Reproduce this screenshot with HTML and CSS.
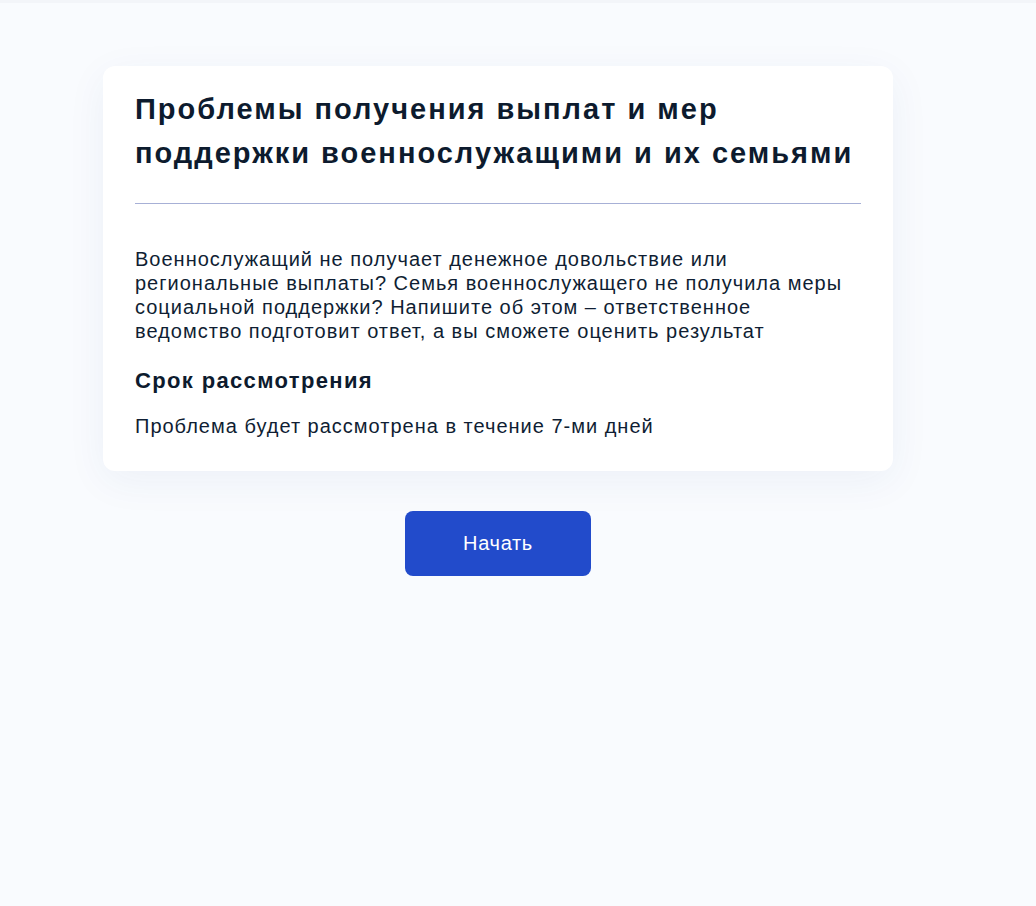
FILE: index.html
```html
<!DOCTYPE html>
<html lang="ru">
<head>
<meta charset="utf-8">
<title>Проблемы получения выплат</title>
<link rel="stylesheet" href="styles.css">
</head>
<body>
<div class="topbar"></div>
<main class="wrap">
  <section class="card">
    <h1 class="title">Проблемы получения выплат и мер поддержки военнослужащими и их семьями</h1>
    <hr class="divider">
    <p class="text">Военнослужащий не получает денежное довольствие или региональные выплаты? Семья военнослужащего не получила меры социальной поддержки? Напишите об этом – ответственное ведомство подготовит ответ, а вы сможете оценить результат</p>
    <h2 class="subtitle">Срок рассмотрения</h2>
    <p class="text">Проблема будет рассмотрена в течение 7-ми дней</p>
  </section>
  <div class="actions">
    <button class="btn">Начать</button>
  </div>
</main>
</body>
</html>
```

FILE: styles.css
```css
html, body {
  margin: 0;
  padding: 0;
}
body {
  background: #f9fbfe;
  font-family: "Liberation Sans", Arial, sans-serif;
  color: #0f1e33;
  min-height: 906px;
}
.topbar {
  height: 3px;
  background: #f3f5f9;
}
.wrap {
  width: 790px;
  margin: 63px 0 0 103px;
}
.card {
  background: #ffffff;
  border-radius: 12px;
  padding: 21px 32px 33px;
  box-shadow: 0 10px 40px rgba(40, 70, 140, 0.06);
}
.title {
  margin: 0;
  font-size: 29px;
  line-height: 44px;
  font-weight: 700;
  letter-spacing: 2px;
  color: #0d1b2e;
}
.divider {
  border: 0;
  border-top: 1px solid #a7b0d6;
  margin: 28px 0 43px;
}
.text {
  margin: 0;
  font-size: 20px;
  line-height: 24px;
  letter-spacing: 1px;
  color: #0f1e33;
}
.subtitle {
  margin: 24px 0 19px;
  font-size: 22px;
  line-height: 28px;
  font-weight: 700;
  letter-spacing: 1.35px;
  color: #0d1b2e;
}
.actions {
  display: flex;
  justify-content: center;
  margin-top: 40px;
}
.btn {
  width: 186px;
  height: 65px;
  border: 0;
  border-radius: 8px;
  background: #224bcb;
  color: #ffffff;
  font-family: "Liberation Sans", Arial, sans-serif;
  font-size: 20px;
  letter-spacing: 0.7px;
  font-weight: 500;
  cursor: pointer;
}
```
